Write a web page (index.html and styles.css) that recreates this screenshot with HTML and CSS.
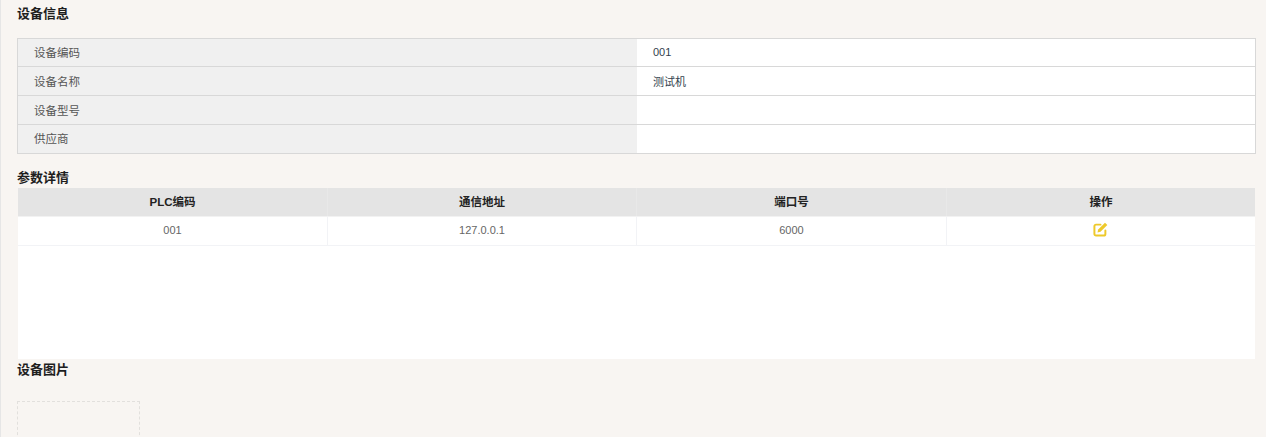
FILE: index.html
```html
<!DOCTYPE html>
<html lang="zh">
<head>
<meta charset="utf-8">
<title>设备信息</title>
<link rel="stylesheet" href="styles.css">
</head>
<body>
<main class="page">
  <h2 class="title title-first">设备信息</h2>
  <div class="info">
    <div class="info-row"><div class="info-label">设备编码</div><div class="info-value">001</div></div>
    <div class="info-row"><div class="info-label">设备名称</div><div class="info-value">测试机</div></div>
    <div class="info-row"><div class="info-label">设备型号</div><div class="info-value"></div></div>
    <div class="info-row"><div class="info-label">供应商</div><div class="info-value"></div></div>
  </div>
  <h2 class="title title-params">参数详情</h2>
  <div class="params">
    <div class="params-row params-head">
      <div class="cell">PLC编码</div><div class="cell">通信地址</div><div class="cell">端口号</div><div class="cell">操作</div>
    </div>
    <div class="params-row params-body">
      <div class="cell">001</div><div class="cell">127.0.0.1</div><div class="cell">6000</div>
      <div class="cell">
        <svg class="edit" viewBox="0 0 16 16" width="15" height="15" aria-hidden="true">
          <path class="edit-box" d="M8 2.800H3.200A1.700 1.700 0 0 0 1.500 4.500v8.300a1.700 1.700 0 0 0 1.700 1.700h8.300a1.700 1.700 0 0 0 1.700-1.700V9"/>
          <path class="edit-pen" d="M12.800.7l2.500 2.500-7.300 7.300-3.200.7.700-3.200z"/>
        </svg>
      </div>
    </div>
  </div>
  <h2 class="title title-image">设备图片</h2>
  <div class="picture"></div>
</main>
</body>
</html>
```
FILE: styles.css
```css
* { box-sizing: border-box; }
html, body { margin: 0; height: 100%; }
body {
  height: 437px;
  overflow: hidden;
  background: #f8f5f2;
  font-family: "Liberation Sans", "Noto Sans CJK SC", sans-serif;
  color: #555;
}
.page {
  height: 100%;
  overflow: hidden;
  padding: 0 10px 0 16px;
  border-left: 1px solid #e6e6e6;
}
.title {
  margin: 0;
  font-size: 13px;
  font-weight: 700;
  color: #1e1e1e;
}
.title-first { height: 28px; line-height: 28px; margin-bottom: 10px; }
.title-params { height: 21px; line-height: 21px; margin-top: 13px; }
.title-image { height: 22px; line-height: 21px; margin-bottom: 20px; }
.info {
  border: 1px solid #d8d8d8;
  background: #fff;
  font-size: 11.5px;
}
.info-row {
  display: flex;
  height: 29px;
  border-bottom: 1px solid #d8d8d8;
}
.info-row:first-child { height: 28px; }
.info-row:last-child { border-bottom: 0; height: 28px; }
.info-label {
  display: flex;
  align-items: center;
  width: 619px;
  padding: 0 0 1px 16px;
  background: #f0f0f0;
  color: #555;
}
.info-row:last-child .info-label { padding-bottom: 2px; }
.info-value {
  display: flex;
  align-items: center;
  padding: 0 0 1px 16px;
  font-size: 11px;
  color: #333f4e;
}
.params {
  height: 171px;
  margin: 0 1px;
  background: #fff;
}
.params-row {
  display: grid;
  grid-template-columns: 310px 309px 310px 1fr;
  height: 29px;
  text-align: center;
}
.params-head {
  background: #e4e4e4;
  font-size: 11.5px;
  font-weight: 700;
  color: #222;
  border-bottom: 1px solid #f2f2f2;
}
.params-body {
  font-size: 11px;
  border-bottom: 1px solid #f2f3f6;
  color: #666;
}
.cell {
  display: flex;
  align-items: center;
  justify-content: center;
  padding-bottom: 2px;
  border-right: 1px solid #f2f3f6;
}
.params-head .cell { border-right-color: #e8e8e8; }
.cell:last-child { border-right: 0; }
.edit { display: block; margin: -2px 2px 0 0; }
.edit-box { fill: none; stroke: #eec92a; stroke-width: 2.1; stroke-linecap: round; }
.edit-pen { fill: #eec92a; }
.picture {
  width: 123px;
  height: 60px;
  border: 1px dashed #e2e0dd;
}
```
